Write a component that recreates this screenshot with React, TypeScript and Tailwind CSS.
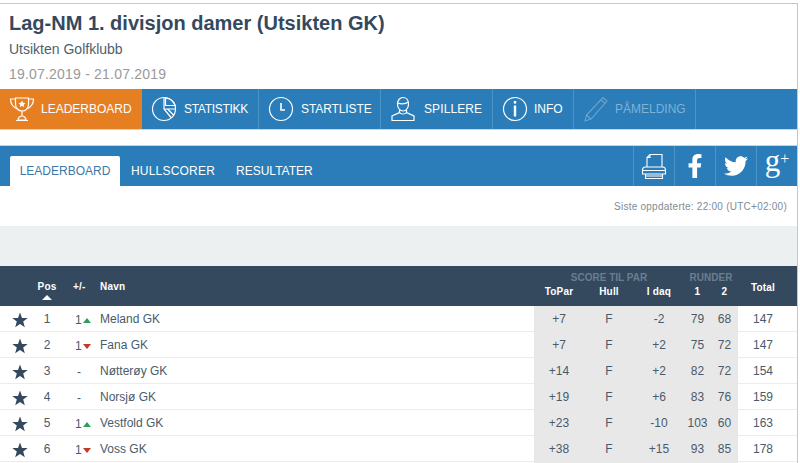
import { FaFacebookF, FaTwitter } from "react-icons/fa";

const rows = [
  { pos: 1, diff: "up", name: "Meland GK", toPar: "+7", hull: "F", today: "-2", r1: 79, r2: 68, total: 147 },
  { pos: 2, diff: "down", name: "Fana GK", toPar: "+7", hull: "F", today: "+2", r1: 75, r2: 72, total: 147 },
  { pos: 3, diff: "", name: "Nøtterøy GK", toPar: "+14", hull: "F", today: "+2", r1: 82, r2: 72, total: 154 },
  { pos: 4, diff: "", name: "Norsjø GK", toPar: "+19", hull: "F", today: "+6", r1: 83, r2: 76, total: 159 },
  { pos: 5, diff: "up", name: "Vestfold GK", toPar: "+23", hull: "F", today: "-10", r1: 103, r2: 60, total: 163 },
  { pos: 6, diff: "down", name: "Voss GK", toPar: "+38", hull: "F", today: "+15", r1: 93, r2: 85, total: 178 },
];

const cols = "grid grid-cols-[35px_24px_41px_434px_50px_50px_50px_27px_27px_50px]";

function Trophy() {
  return (
    <svg width="26" height="26" viewBox="0 0 26 26" fill="none" stroke="white" strokeWidth="1.2">
      <path d="M6.5 2h13v6c0 4-2.500 7-6.500 7s-6.500-3-6.500-7z" />
      <path d="M6.500 3H1.500c0 5 2 8 7 10M19.500 3h5c0 5-2 8-7 10" />
      <path d="M13 15v5M9 24c0-2 2-4 4-4s4 2 4 4zM7 24.500h12" />
      <path d="M13 4.500l1.100 2.300 2.400.3-1.800 1.600.5 2.400-2.200-1.200-2.200 1.200.5-2.400-1.800-1.600 2.400-.3z" fill="white" stroke="none" />
    </svg>
  );
}

function Pie() {
  return (
    <svg width="26" height="26" viewBox="0 0 26 26" fill="none" stroke="white" strokeWidth="1.2">
      <circle cx="13" cy="13" r="11.500" />
      <path d="M13 1.500V13l7 8.500M13 13h11.500M14.500 9.500h10M16.500 13l6 6" />
      <path d="M14.500 1.800c4.500.5 8.500 3.700 9.700 7.700h-9.700z" />
    </svg>
  );
}

function Clock() {
  return (
    <svg width="26" height="26" viewBox="0 0 26 26" fill="none" stroke="white" strokeWidth="1.2">
      <circle cx="13" cy="13" r="11.500" />
      <path d="M13 7v7h4" strokeWidth="1.600" />
    </svg>
  );
}

function Person() {
  return (
    <svg width="26" height="26" viewBox="0 0 26 26" fill="none" stroke="white" strokeWidth="1.2">
      <path d="M7.500 8c0-4 2.500-6.500 5.500-6.500S18.500 4 18.500 8c0 4-2.500 7-5.500 7s-5.500-3-5.500-7z" />
      <path d="M7.500 7c3 1 8 1 11-1M9.500 14v2.500L2 20v4.500h22V20l-7.500-3.500V14" />
      <path d="M9.500 16.500c1 2 6 2 7 0" />
    </svg>
  );
}

function Info() {
  return (
    <svg width="26" height="26" viewBox="0 0 26 26" fill="none" stroke="white" strokeWidth="1.2">
      <circle cx="13" cy="13" r="11.500" />
      <rect x="11.800" y="5" width="2.400" height="2.600" fill="white" stroke="none" />
      <rect x="11.800" y="9.500" width="2.400" height="11" fill="white" stroke="none" />
    </svg>
  );
}

function Pencil() {
  return (
    <svg width="26" height="26" viewBox="0 0 26 26" fill="none" stroke="#6ba5cf" strokeWidth="1.1">
      <path d="M20 1.500l4 3.500L8 23l-6 2 1.500-6z" />
      <path d="M3.500 19L8 23M18 4l4 3.500" />
    </svg>
  );
}

function Printer() {
  return (
    <svg width="26" height="27" viewBox="0 0 26 27" fill="none" stroke="white" strokeWidth="1.1">
      <path d="M6 14V4.500L9 1.500h12V14" />
      <path d="M9 1.500v3H6" />
      <path d="M1.500 21v-4c0-2 1-3 3-3h17c2 0 3 1 3 3v4z" />
      <path d="M1.500 17.500h23M4.500 21v4.500h17V21M4.500 23h17" />
    </svg>
  );
}

function Star() {
  return (
    <svg width="16" height="16" viewBox="0 0 16 16" fill="#34495e">
      <polygon points="8,0.500 10,5.900 15.700,6.100 11.200,9.600 12.800,15.200 8,12 3.200,15.200 4.800,9.600 0.300,6.100 6,5.900" />
    </svg>
  );
}

function NavItem({ icon, label, w, active, muted, labelClass }: { icon: React.ReactNode; label: string; w: string; active?: boolean; muted?: boolean; labelClass?: string }) {
  return (
    <div className={`flex items-center gap-[5px] pl-[8px] border-r border-[#4a94c6] ${w} ${active ? "bg-[#e67e22] border-r-0" : ""} ${muted ? "text-[#7fb2d6]" : "text-white"}`}>
      <span className="flex w-[27px] justify-center">{icon}</span>
      <span className={`text-[12px] pl-[1px] ${labelClass ?? ""}`}>{label}</span>
    </div>
  );
}

export default function App() {
  return (
    <div className="w-[800px] h-[463px] bg-white overflow-hidden font-['Liberation_Sans',Arial,sans-serif] pt-[3px]">
      <div className="w-[798px] h-[460px] border-t border-r border-[#c4c8cc]">
        {/* event header */}
        <div className="h-[85px] pl-[9px] pt-[7px]">
          <h1 className="text-[20px] font-bold leading-[24px] text-[#34495e]">Lag-NM 1. divisjon damer (Utsikten GK)</h1>
          <p className="mt-[6px] text-[14px] leading-[16px] text-[#4d5f70]">Utsikten Golfklubb</p>
          <p className="mt-[9px] text-[14px] leading-[16px] tracking-[0.2px] text-[#999999]">19.07.2019 - 21.07.2019</p>
        </div>

        {/* main nav */}
        <div className="flex h-[41px] border-b border-[#c9d6df] bg-[#2a7db8]">
          <NavItem icon={<Trophy />} label="LEADERBOARD" w="w-[142px]" active />
          <NavItem icon={<Pie />} label="STATISTIKK" w="w-[117px]" labelClass="ml-[1px] tracking-[-0.3px]" />
          <NavItem icon={<Clock />} label="STARTLISTE" w="w-[122px]" labelClass="ml-[1px] tracking-[-0.1px]" />
          <NavItem icon={<Person />} label="SPILLERE" w="w-[112px]" labelClass="ml-[2px] tracking-[0.1px]" />
          <NavItem icon={<Info />} label="INFO" w="w-[81px]" />
          <NavItem icon={<Pencil />} label="PÅMELDING" w="w-[122px]" muted />
        </div>

        {/* tabs */}
        <div className="mt-[15px] h-[41px] border-t border-[#c4d6e2] bg-[#2a7db8] flex items-end justify-between">
          <div className="flex pl-[10px] text-[12px]">
            <div className="flex h-[30px] w-[110px] items-center justify-center rounded-t-[2px] bg-white text-[#3d78a8]">LEADERBOARD</div>
            <div className="flex h-[30px] items-center pl-[11px] tracking-[0.2px] text-white">HULLSCORER</div>
            <div className="flex h-[30px] items-center pl-[21px] text-white">RESULTATER</div>
          </div>
          <div className="flex h-[40px] text-white">
            <div className="flex w-[41px] items-center justify-center border-l border-[#4a94c6]"><Printer /></div>
            <div className="flex w-[41px] items-center justify-center border-l border-[#4a94c6]"><FaFacebookF size={24} /></div>
            <div className="flex w-[41px] items-center justify-center border-l border-[#4a94c6]"><FaTwitter size={24} /></div>
            <div className="flex w-[41px] items-start justify-center border-l border-[#4a94c6] font-['Liberation_Serif',serif]">
              <span className="text-[31px] leading-[30px]">g</span>
              <span className="text-[16px] leading-[26px]">+</span>
            </div>
          </div>
        </div>

        <div className="flex h-[40px] items-center justify-end pr-[10px] pt-[1px] text-[10px] tracking-[0.25px] text-[#808b94]">
          Siste oppdaterte: 22:00 (UTC+02:00)
        </div>
        <div className="h-[40px] bg-[#ecf0f1]" />

        {/* table header */}
        <div className={`${cols} grid-rows-[18px_22px] h-[40px] bg-[#34495e] text-[10px] font-bold text-white tracking-[0.2px]`}>
          <div className="row-span-2" />
          <div className="row-span-2 flex flex-col items-center pt-[15px] leading-[12px]">
            Pos
            <span className="mt-[2px] h-0 w-0 border-x-[5px] border-b-[5px] border-x-transparent border-b-white" />
          </div>
          <div className="row-span-2 pl-[14px] pt-[15px] leading-[12px]">+/-</div>
          <div className="row-span-2 pt-[15px] leading-[12px]">Navn</div>
          <div className="col-span-3 self-end text-center leading-[12px] font-bold tracking-normal text-[#6a7e91]">SCORE TIL PAR</div>
          <div className="col-span-2 self-end text-center leading-[12px] font-bold tracking-normal text-[#6a7e91]">RUNDER</div>
          <div className="row-span-2 pt-[16px] text-center leading-[12px]">Total</div>
          <div className="col-start-5 pt-[2px] text-center leading-[12px]">ToPar</div>
          <div className="pt-[2px] text-center leading-[12px]">Hull</div>
          <div className="pt-[2px] text-center leading-[12px]">I daq</div>
          <div className="pt-[2px] text-center leading-[12px]">1</div>
          <div className="pt-[2px] text-center leading-[12px]">2</div>
        </div>

        {/* rows */}
        {rows.map((r) => (
          <div key={r.pos} className={`${cols} h-[26px] items-stretch border-b border-[#e9edef] text-[12px] leading-[27px] text-[#4a5a6a]`}>
            <div className="flex items-center justify-end pr-[7px]"><Star /></div>
            <div className="text-center">{r.pos}</div>
            <div className="flex items-center pl-[16px] pt-[1px]">
              {r.diff === "" ? (
                <span className="pl-[2px]">-</span>
              ) : (
                <>
                  <span>1</span>
                  <span
                    className={
                      r.diff === "up"
                        ? "ml-[1px] h-0 w-0 border-x-[4px] border-b-[5px] border-x-transparent border-b-[#2f9e5b]"
                        : "ml-[1px] h-0 w-0 border-x-[4px] border-t-[5px] border-x-transparent border-t-[#c0392b]"
                    }
                  />
                </>
              )}
            </div>
            <div>{r.name}</div>
            <div className="bg-[#e8e8e8] text-center">{r.toPar}</div>
            <div className="bg-[#e8e8e8] text-center">{r.hull}</div>
            <div className="bg-[#e8e8e8] text-center">{r.today}</div>
            <div className="bg-[#e8e8e8] text-center">{r.r1}</div>
            <div className="bg-[#e8e8e8] text-center">{r.r2}</div>
            <div className="text-center">{r.total}</div>
          </div>
        ))}
      </div>
    </div>
  );
}
